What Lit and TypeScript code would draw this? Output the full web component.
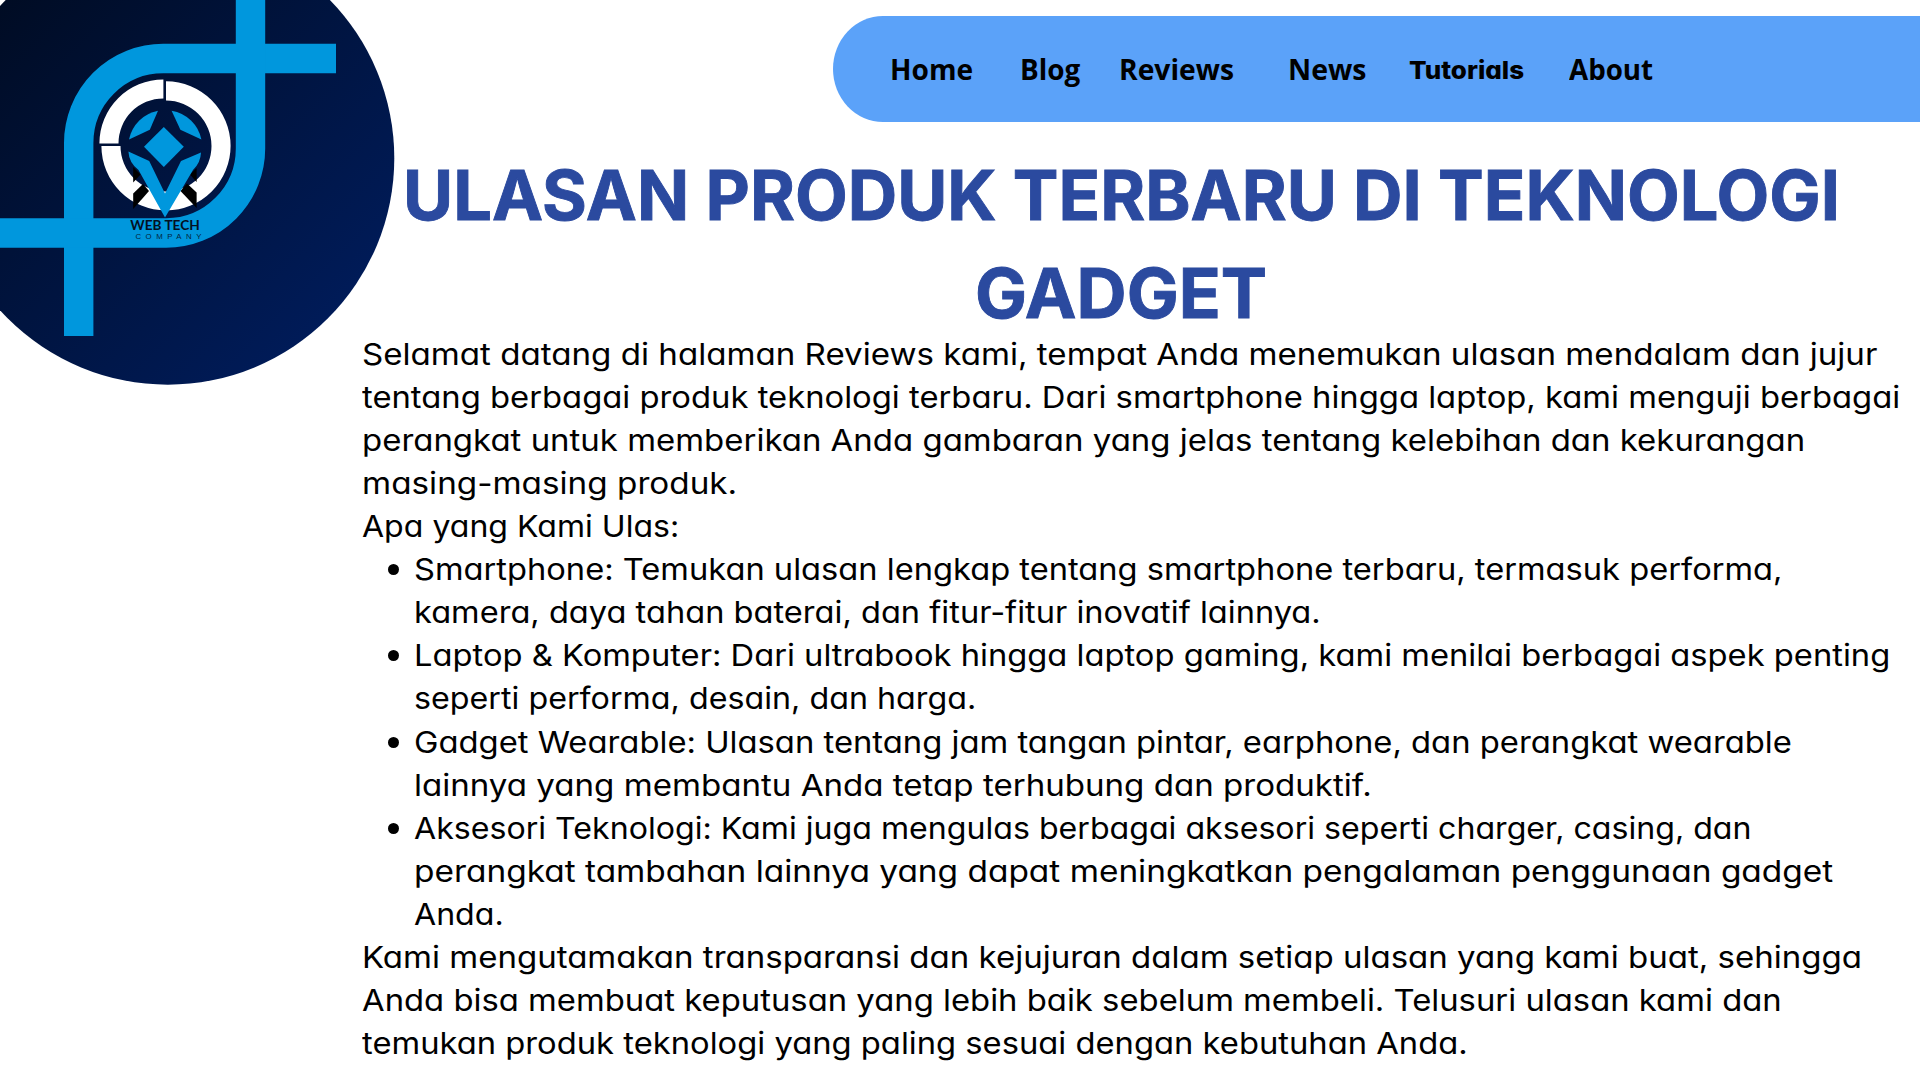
import { LitElement, html, css, svg } from "lit";
import { customElement, property } from "lit/decorators.js";

/**
 * One line of text stretched horizontally so its ink spans `span` pixels.
 * `pad` is the total side bearing of the line; without it the bearings are measured.
 */
@customElement("fit-line")
class FitLine extends LitElement {
  @property() text = "";
  @property({ type: Number }) span = 0;
  @property({ type: Number }) pad = -1;

  static styles = css`
    :host {
      display: block;
      white-space: pre;
    }
    .line {
      display: inline-block;
      transform-origin: 0 50%;
    }
  `;

  firstUpdated() {
    const el = this.renderRoot.querySelector(".line") as HTMLElement;
    const width = el.getBoundingClientRect().width;
    let scale: number;
    let shift: number;
    if (this.pad >= 0) {
      scale = (this.span + this.pad) / width;
      shift = -this.pad / 2;
    } else {
      const cs = getComputedStyle(el);
      const ctx = document.createElement("canvas").getContext("2d")!;
      ctx.font = `${cs.fontWeight} ${cs.fontSize} ${cs.fontFamily}`;
      const m = ctx.measureText(this.text);
      const left = -m.actualBoundingBoxLeft;
      const right = m.width - m.actualBoundingBoxRight;
      scale = this.span / (width - left - right);
      shift = -left * scale;
    }
    this.style.width = `${this.span}px`;
    el.style.transform = `scaleX(${scale.toFixed(5)})`;
    el.style.marginLeft = `${shift.toFixed(2)}px`;
  }

  render() {
    return html`<span class="line">${this.text}</span>`;
  }
}

type Line = [string, number];

const NAV: { label: string; width: number; gap: number; alt?: boolean }[] = [
  { label: "Home", width: 80.5, gap: 49 },
  { label: "Blog", width: 58.5, gap: 41.5 },
  { label: "Reviews", width: 112, gap: 57 },
  { label: "News", width: 75.5, gap: 42.5 },
  { label: "Tutorials", width: 115, gap: 45 },
  { label: "About", width: 84, gap: 0 },
].map((n) => ({ ...n, alt: n.label === "Tutorials" }));

const INTRO: Line[] = [
  ["Selamat datang di halaman Reviews kami, tempat Anda menemukan ulasan mendalam dan jujur", 1512.2],
  ["tentang berbagai produk teknologi terbaru. Dari smartphone hingga laptop, kami menguji berbagai", 1535],
  ["perangkat untuk memberikan Anda gambaran yang jelas tentang kelebihan dan kekurangan", 1440],
  ["masing-masing produk.", 372],
  ["Apa yang Kami Ulas:", 314],
];

const ITEMS: Line[][] = [
  [
    ["Smartphone: Temukan ulasan lengkap tentang smartphone terbaru, termasuk performa,", 1365.3],
    ["kamera, daya tahan baterai, dan fitur-fitur inovatif lainnya.", 903.5],
  ],
  [
    ["Laptop & Komputer: Dari ultrabook hingga laptop gaming, kami menilai berbagai aspek penting", 1473],
    ["seperti performa, desain, dan harga.", 559],
  ],
  [
    ["Gadget Wearable: Ulasan tentang jam tangan pintar, earphone, dan perangkat wearable", 1374.7],
    ["lainnya yang membantu Anda tetap terhubung dan produktif.", 954.5],
  ],
  [
    ["Aksesori Teknologi: Kami juga mengulas berbagai aksesori seperti charger, casing, dan", 1334.3],
    ["perangkat tambahan lainnya yang dapat meningkatkan pengalaman penggunaan gadget", 1416],
    ["Anda.", 86.5],
  ],
];

const OUTRO: Line[] = [
  ["Kami mengutamakan transparansi dan kejujuran dalam setiap ulasan yang kami buat, sehingga", 1496.7],
  ["Anda bisa membuat keputusan yang lebih baik sebelum membeli. Telusuri ulasan kami dan", 1416.5],
  ["temukan produk teknologi yang paling sesuai dengan kebutuhan Anda.", 1102.5],
];

const lines = (ls: Line[]) =>
  ls.map(([t, w]) => html`<fit-line .text=${t} .span=${w} .pad=${3.2}></fit-line>`);

const logo = svg`
  <defs>
    <linearGradient id="disc" gradientUnits="userSpaceOnUse" x1="7" y1="-2" x2="328" y2="318">
      <stop offset="0" stop-color="#000c24" />
      <stop offset="1" stop-color="#001b58" />
    </linearGradient>
  </defs>
  <circle cx="167.8" cy="158.2" r="226.5" fill="url(#disc)" />
  <g fill="none" stroke="#0097dd" stroke-width="29.4">
    <path d="M78.7 336V143A84.5 84.5 0 0 1 163.2 58.5H336" />
    <path d="M250.5 0V148.5A84.5 84.5 0 0 1 166 233H0" />
  </g>
  <g fill="#fff">
    <path d="M163.4 79.4V98.4A45 45 0 0 0 118.5 143.4H99.4A64 64 0 0 1 163.4 79.4Z" />
    <path d="M166 81.3A64.6 64.6 0 1 1 101.4 146H120.5A45.5 45.5 0 1 0 166 100.5Z" />
  </g>
  <g fill="#000">
    <path d="M133.2 193.5L143 184L149 191L133.2 209Z" />
    <path d="M196.6 192.5L187 183.5L180.5 191L196.6 208Z" />
    <path d="M133.2 167L140.5 174.5L133.2 182.5Z" />
    <path d="M196.6 168L190 174.5L196.6 182Z" />
  </g>
  <g fill="#0097dd">
    <path d="M158 110.7A36.5 36.5 0 0 0 129 139.6L149.8 129.8Z" />
    <path d="M171.6 110.7A36.5 36.5 0 0 1 201.4 139.6L180.4 129.8Z" />
    <path d="M163.8 127L183.8 146.8L163.8 167L144 146.8Z" />
    <path d="M128.4 151.6L149.2 161L165 193.6L181 161L201 152.6Q200.6 163 193 170L165 217.6L138.5 170Q129 163 128.4 151.6Z" />
  </g>
  <text class="brand" x="130.3" y="230.2" textLength="69.5" lengthAdjust="spacingAndGlyphs">WEB TECH</text>
  <text class="sub" x="135.4" y="238.9" textLength="66">COMPANY</text>
`;

@customElement("app-root")
class AppRoot extends LitElement {
  static styles = css`
    :host {
      display: block;
      position: relative;
      width: 1920px;
      height: 1080px;
      overflow: hidden;
      background: #fff;
      color: #000;
      font-family: Inter, "Open Sans", sans-serif;
      font-feature-settings: "cv11" 1;
    }
    .logo {
      position: absolute;
      left: 0;
      top: 0;
      width: 400px;
      height: 390px;
    }
    .brand {
      font: 700 13px Lato, sans-serif;
      fill: #04101f;
    }
    .sub {
      font: 400 7.8px "Liberation Sans", sans-serif;
      fill: #04233a;
    }
    .page {
      display: flex;
      flex-direction: column;
      padding-top: 15.8px;
    }
    .nav {
      display: flex;
      align-items: center;
      box-sizing: border-box;
      height: 106.5px;
      margin-left: 833px;
      padding-left: 59px;
      border-radius: 50px 0 0 50px / 53px 0 0 53px;
      background: #5ba2f9;
      font: 700 28px/40px "Open Sans", sans-serif;
    }
    .item {
      flex: none;
    }
    .alt {
      font: 800 24.5px/38px Inter, sans-serif;
      font-feature-settings: "cv11" 1;
      padding-top: 1.5px;
    }
    .title {
      display: flex;
      flex-direction: column;
      align-items: center;
      margin: 24.7px 0 0 322px;
      font-size: 68.5px;
      font-weight: 700;
      line-height: 98px;
      color: #2b4a9f;
      -webkit-text-stroke: 0.9px #2b4a9f;
    }
    .body {
      margin: -10.3px 0 0 363.3px;
      font-size: 30px;
      line-height: 43.1px;
    }
    .list {
      margin: 0;
      padding: 0 0 0 52.5px;
      list-style: none;
    }
    .entry::before {
      content: "";
      float: left;
      width: 11px;
      height: 11px;
      margin: 16px 0 0 -28.3px;
      border-radius: 50%;
      background: #000;
    }
  `;

  render() {
    return html`
      <svg class="logo" viewBox="0 0 400 390">${logo}</svg>
      <div class="page">
        <nav class="nav">
          ${NAV.map(
            (n) => html`<fit-line
              class="item ${n.alt ? "alt" : ""}"
              style="margin-right:${n.gap}px"
              .text=${n.label}
              .span=${n.width}
            ></fit-line>`
          )}
        </nav>
        <div class="title">
          <fit-line .text=${"ULASAN PRODUK TERBARU DI TEKNOLOGI"} .span=${1428} .pad=${9}></fit-line>
          <fit-line .text=${"GADGET"} .span=${287} .pad=${5}></fit-line>
        </div>
        <div class="body">
          ${lines(INTRO)}
          <ul class="list">
            ${ITEMS.map((i) => html`<li class="entry">${lines(i)}</li>`)}
          </ul>
          ${lines(OUTRO)}
        </div>
      </div>
    `;
  }
}
